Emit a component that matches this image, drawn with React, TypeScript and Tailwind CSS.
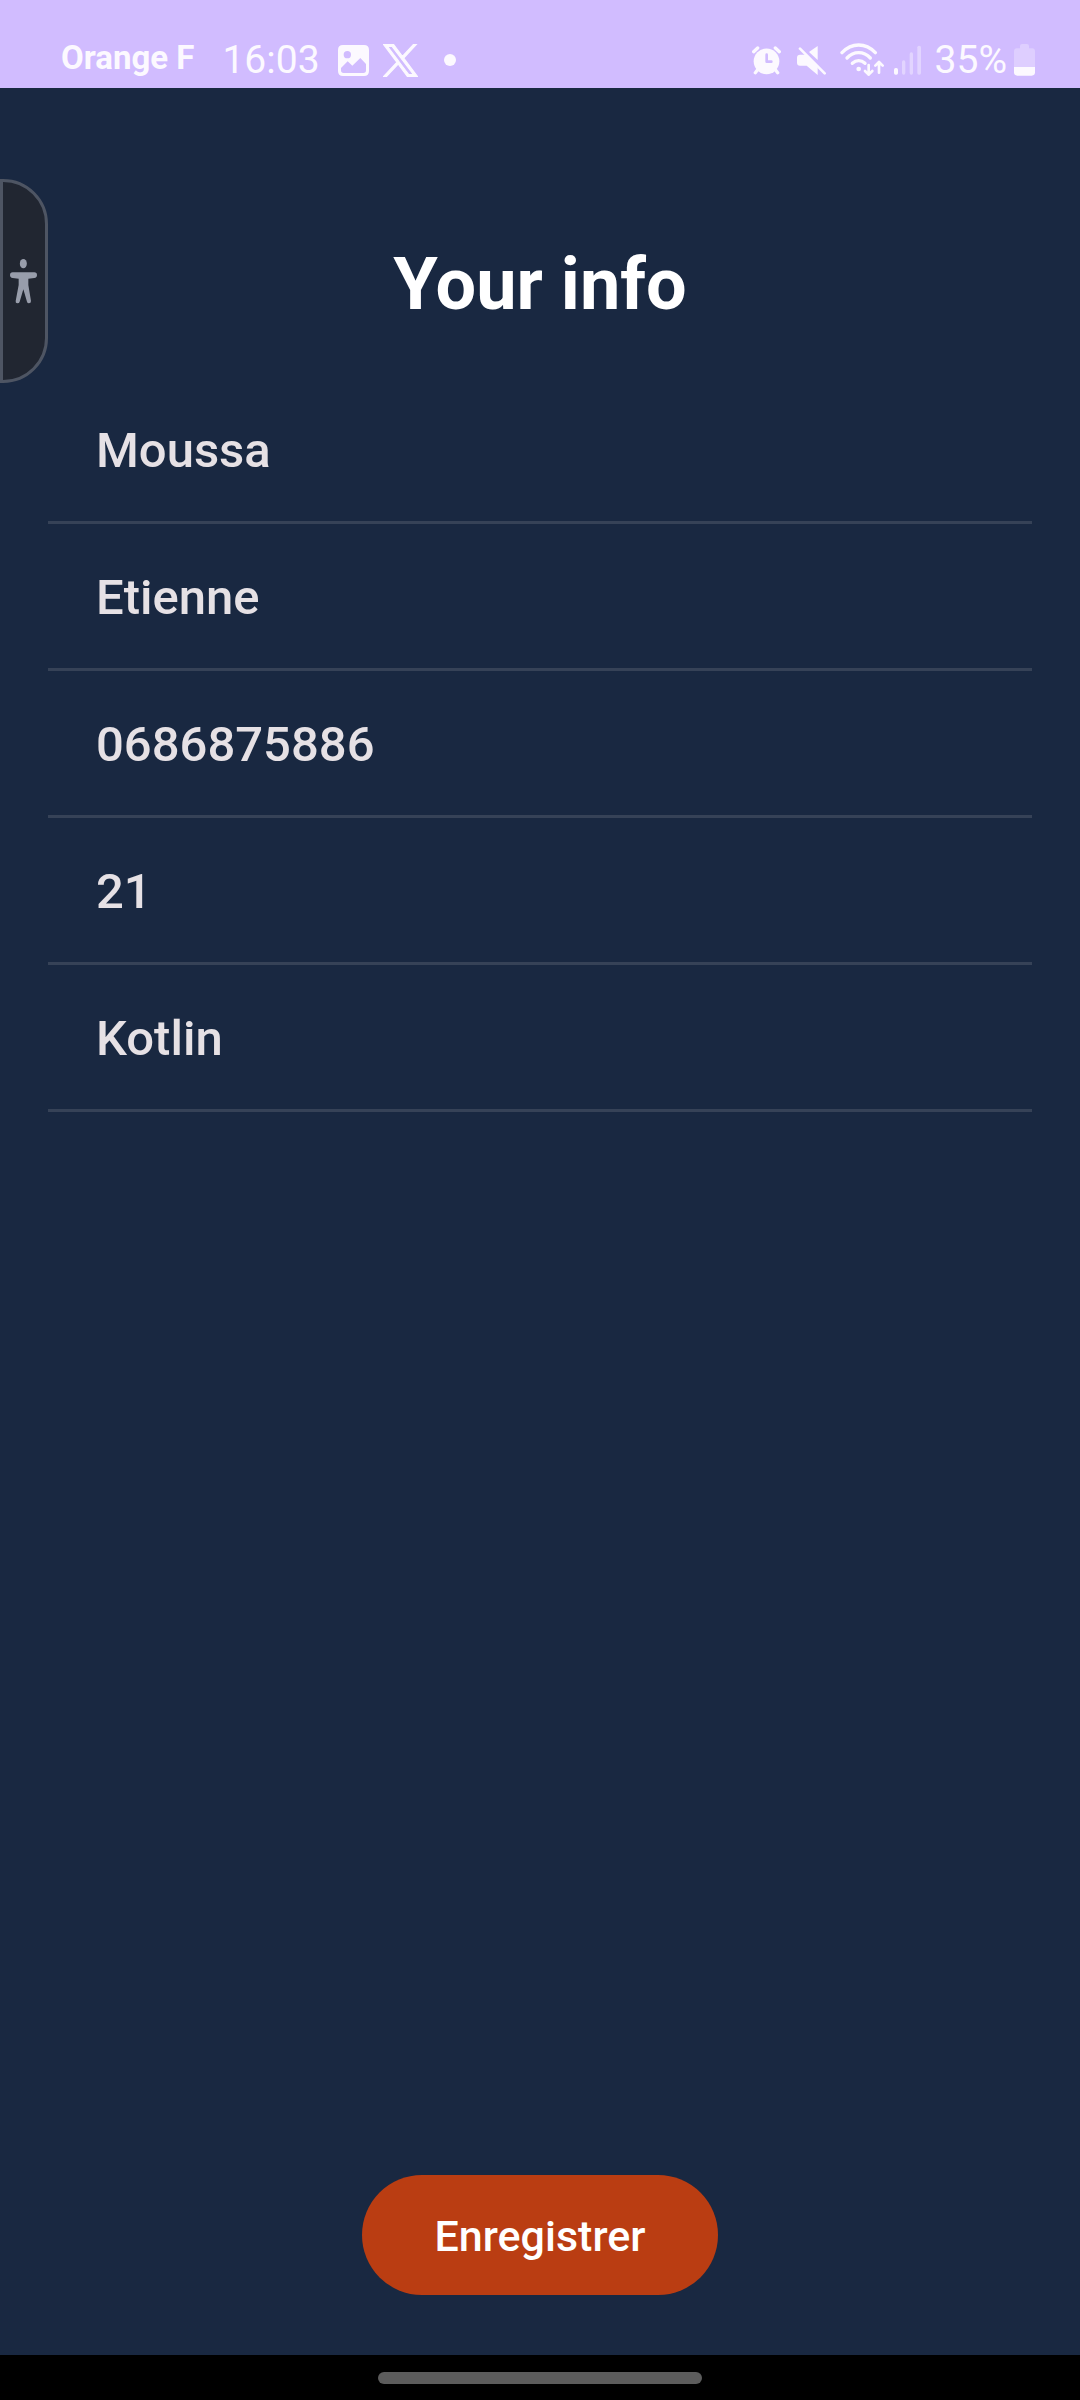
import React from "react";

const fields = ["Moussa", "Etienne", "0686875886", "21", "Kotlin"];

function ImageIcon() {
  return (
    <svg className="ml-[18px] h-[31px] w-[31px] shrink-0" viewBox="0 0 93 93" fill="currentColor" aria-hidden="true">
      <path
        fillRule="evenodd"
        d="M15 0H78Q93 0 93 15V78Q93 93 78 93H15Q0 93 0 78V15Q0 0 15 0ZM28 18A11 11 0 1 0 28 40A11 11 0 1 0 28 18ZM9 69V76Q9 84 17 84H76Q84 84 84 76V57L67 39L43 62L29 49Z"
      />
    </svg>
  );
}

function XLogo() {
  return (
    <svg className="ml-[14px] h-[33px] w-[35px] shrink-0" viewBox="-20 -20 1240 1267" preserveAspectRatio="none" fill="currentColor" stroke="currentColor" strokeWidth="40" aria-hidden="true">
      <path d="M714.163 519.284L1160.89 0H1055.03L667.137 450.887L357.328 0H0L468.492 681.821L0 1226.37H105.866L515.491 750.218L842.672 1226.37H1200L714.137 519.284H714.163ZM569.165 687.828L521.697 619.934L144.011 79.6944H306.615L611.412 515.685L658.88 583.579L1055.08 1150.3H892.476L569.165 687.854V687.828Z" />
    </svg>
  );
}

function AlarmIcon() {
  return (
    <svg className="h-[29px] w-[29px] shrink-0" viewBox="0 0 87 87" fill="none" stroke="currentColor" strokeLinecap="round" aria-hidden="true">
      <circle cx="43.500" cy="46" r="38.500" fill="currentColor" stroke="none" />
      <path d="M5 17L17 6M82 17L70 6" strokeWidth="10" />
      <path d="M18 70L10 80M69 70L77 80" strokeWidth="10" />
      <path d="M44 26V47H58" stroke="#d1bcff" strokeWidth="8" strokeLinejoin="round" />
    </svg>
  );
}

function MuteIcon() {
  return (
    <svg className="ml-4 h-[29px] w-[29px] shrink-0" viewBox="0 0 87 87" fill="currentColor" aria-hidden="true">
      <path d="M62 0V42L36 18Z" />
      <path d="M9 26H26L62 62V87L29 59H9Q0 59 0 50V35Q0 26 9 26Z" />
      <path d="M9 8L83 82" stroke="currentColor" strokeWidth="8" strokeLinecap="round" />
    </svg>
  );
}

function WifiIcon() {
  return (
    <svg className="ml-[14px] h-[34px] w-11 shrink-0" viewBox="0 0 132 102" fill="none" stroke="currentColor" strokeLinecap="round" aria-hidden="true">
      <path d="M6 29Q28 6 56 6T106 29" strokeWidth="10" />
      <path d="M21 45Q36 29 56 29T91 45" strokeWidth="10" />
      <path d="M37 61Q46 53 56 53T75 61" strokeWidth="10" />
      <circle cx="56" cy="78" r="7" fill="currentColor" stroke="none" />
      <path d="M86 66V95M75 84L86 95L97 84" strokeWidth="8" strokeLinejoin="round" />
      <path d="M117 89V58M106 68L117 57L128 68" strokeWidth="8" strokeLinejoin="round" />
    </svg>
  );
}

function SignalIcon() {
  return (
    <svg className="ml-[10px] h-[30px] w-7 shrink-0" viewBox="0 0 84 90" fill="currentColor" aria-hidden="true">
      <rect x="0" y="69" width="12" height="20" rx="5" />
      <g opacity="0.4">
        <rect x="24" y="46" width="10" height="43" rx="5" />
        <rect x="47" y="22" width="10" height="67" rx="5" />
        <rect x="70" y="2" width="11" height="87" rx="5" />
      </g>
    </svg>
  );
}

function BatteryIcon() {
  return (
    <svg className="ml-[7px] h-8 w-[21px] shrink-0" viewBox="0 0 63 96" fill="currentColor" aria-hidden="true">
      <path opacity="0.3" d="M18 6Q18 0 24 0H39Q45 0 45 6V13H54Q63 13 63 22V69H0V22Q0 13 9 13H18Z" />
      <path d="M0 69H63V85Q63 95 53 95H10Q0 95 0 85Z" />
    </svg>
  );
}

function StatusBar() {
  return (
    <header className="flex h-[88px] items-center justify-between bg-[#d1bcff] pt-8 pr-[45px] pl-[61px] text-[#fcf9ff]">
      <div className="flex items-center">
        <span className="pb-1 text-[33px] leading-9 font-bold whitespace-nowrap">Orange F</span>
        <time className="ml-7 text-[39px] leading-[44px]">16:03</time>
        <ImageIcon />
        <XLogo />
        <span className="ml-[26px] size-3 rounded-full bg-current" />
      </div>
      <div className="flex items-center">
        <AlarmIcon />
        <MuteIcon />
        <WifiIcon />
        <SignalIcon />
        <span className="ml-[13px] text-[39px] leading-[44px]">35%</span>
        <BatteryIcon />
      </div>
    </header>
  );
}

function AccessibilityHandle() {
  return (
    <button
      type="button"
      aria-label="Accessibility"
      className="absolute top-[91px] left-0 flex h-[204px] w-12 items-center justify-center rounded-r-[45px] border-[3px] border-[#4e5563] bg-[#212631] pr-[2px] text-[#989dab]"
    >
      <svg className="h-[45px] w-[27px] shrink-0" viewBox="0 0 81 135" fill="currentColor" aria-hidden="true">
        <ellipse cx="40" cy="14" rx="10.500" ry="14" />
        <path d="M8 40H73Q81 40 81 48Q81 56 73 57L55 59V78L63 126Q63 133 57 133Q52 133 51 128L40 91L29 128Q28 133 22 133Q16 133 17 126L26 78V59L8 57Q0 56 0 48Q0 40 8 40Z" />
      </svg>
    </button>
  );
}

export default function App() {
  return (
    <div className="flex min-h-screen flex-col bg-[#192841] font-[Roboto,sans-serif]">
      <StatusBar />
      <main className="relative flex flex-1 flex-col px-12 pt-[152px] pb-[60px]">
        <AccessibilityHandle />
        <h1 className="text-center text-[72px] leading-[90px] font-bold text-white">Your info</h1>
        <ul className="mt-[47px]">
          {fields.map((value) => (
            <li key={value} className="flex h-[147px] items-center border-b-[3px] border-[#364257] px-12 pt-[3px] text-[49px] leading-[72px] font-medium text-[#e6e1e5]">
              {value}
            </li>
          ))}
        </ul>
        <button type="button" className="mt-auto h-[120px] self-center rounded-full bg-[#ba3d12] px-[73px] pt-[2px] text-[43px] leading-[60px] font-medium text-white">
          Enregistrer
        </button>
      </main>
      <footer className="flex h-[45px] items-center justify-center bg-black">
        <div className="h-3 w-3/10 rounded-full bg-[#5c5c5c]" />
      </footer>
    </div>
  );
}
